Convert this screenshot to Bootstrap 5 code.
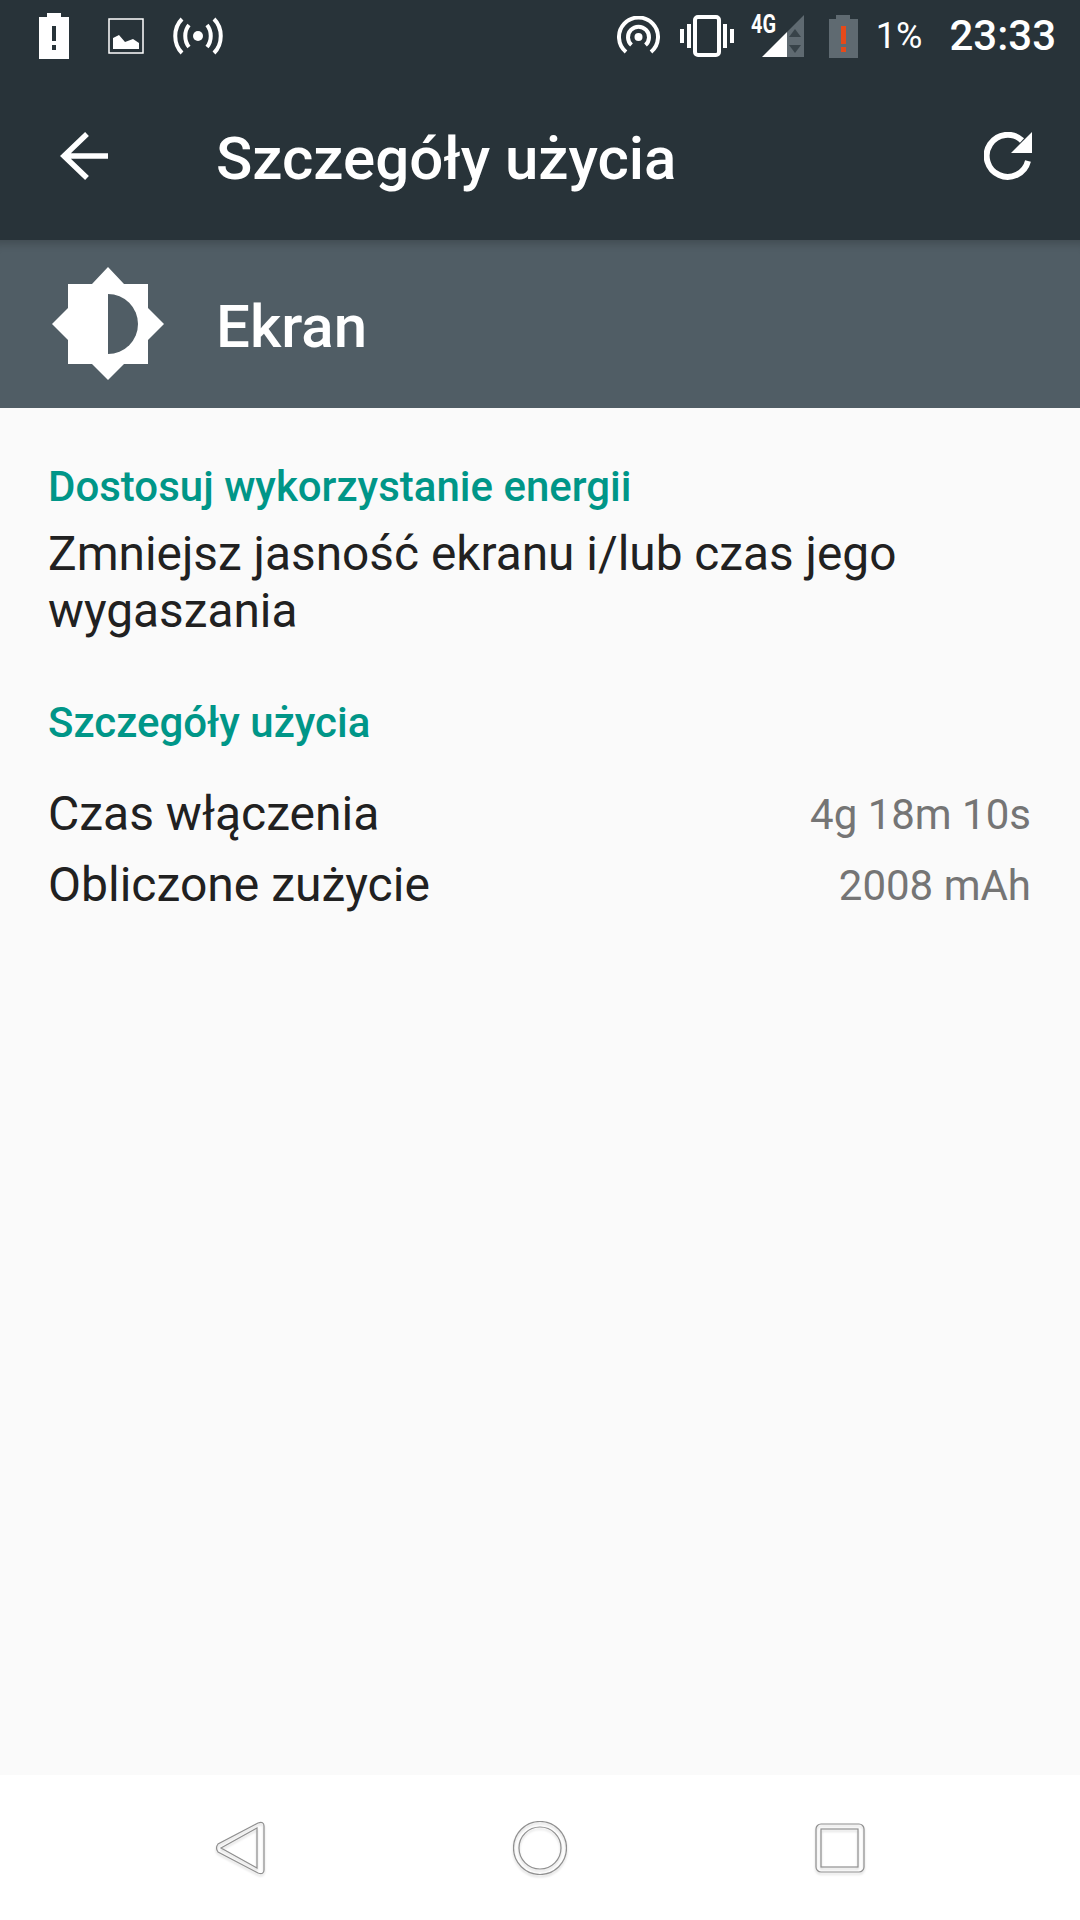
<!DOCTYPE html>
<html lang="pl">
<head>
    <meta charset="UTF-8" />
    <meta name="viewport" content="width=device-width, initial-scale=1" />
    <title>Szczegóły użycia</title>
    <link href="https://cdn.jsdelivr.net/npm/bootstrap@5.3.3/dist/css/bootstrap.min.css" rel="stylesheet" />
    <style>
      body {
        font-family: Roboto, "Liberation Sans", sans-serif;
        background-color: #fafafa;
      }
      .ekran { width: 1080px; height: 1920px; }
      .pasek-stanu { height: 72px; background-color: #283339; padding: 0 24px 0 39px; color: #fff; }
      .ikona-obraz { margin-left: 39px; }
      .ikona-radio { margin-left: 29px; }
      .ikona-wibracja { margin-left: 20px; }
      .ikona-sygnal { margin-left: 17px; }
      .ikona-bateria { margin-left: 25px; }
      .procent { font-size: 36px; line-height: 1; margin-left: 18px; }
      .zegar { font-size: 42px; line-height: 1; margin-left: 27px; font-weight: 500; }
      .pasek-tytulu { height: 168px; background-color: #283339; color: #fff; padding: 0 48px 0 60px; }
      .tytul { font-size: 60px; font-weight: 500; margin: 0 0 0 108px; padding-top: 5px; line-height: 1; }
      .pasek-ekran { height: 168px; background-color: #505d65; color: #fff; padding: 0 0 0 51px; box-shadow: inset 0 12px 8px -8px rgba(0,0,0,.18); }
      .pasek-ekran .tytul { margin-left: 51px; }
      .tresc { padding: 55px 49px 0 48px; }
      .naglowek { color: #009688; font-size: 42px; font-weight: 500; line-height: 48px; margin: 0; }
      .opis { color: #212121; font-size: 47.800px; line-height: 57px; margin: 15px 0 59px; }
      .wiersze { margin-top: 31px; }
      .wiersz { height: 71px; color: #212121; font-size: 48px; }
      .wartosc { color: #757575; font-size: 42px; padding-top: 2px; }
      .nawigacja { height: 145px; background-color: #fff; padding: 0 215px 0 215px; }
      .nawigacja svg { filter: drop-shadow(0 2px 1px rgba(0,0,0,.18)); }
    </style>
</head>
<body>
  <div class="ekran d-flex flex-column overflow-hidden">

    <div class="pasek-stanu d-flex align-items-center">
      <svg width="30" height="48" viewBox="0 0 30 48"><path fill="#fff" d="M8 1h14v4h8v42H0V5h8z"/><path fill="#283339" d="M13 14h4v15h-4zM13 33h4v5h-4z"/></svg>
      <svg class="ikona-obraz" width="36" height="36" viewBox="0 0 36 36"><rect x="1" y="1" width="34" height="34" fill="none" stroke="#fff" stroke-width="1.500"/><path fill="#fff" d="M5 20l6-3 6 7 8-3 6 4v6H5z"/></svg>
      <svg class="ikona-radio" width="50" height="38" viewBox="0 0 50 38" fill="none" stroke="#fff" stroke-width="4"><circle cx="25" cy="19" r="5" fill="#fff" stroke="none"/><path d="M16 8c-5 6-5 16 0 22M34 8c5 6 5 16 0 22M9 2C0 11 0 27 9 36M41 2c9 9 9 25 0 34"/></svg>
      <div class="flex-grow-1"></div>
      <svg width="43" height="40" viewBox="0 0 43 40" fill="none" stroke="#fff" stroke-width="4"><circle cx="21.500" cy="21" r="4" fill="#fff" stroke="none"/><path d="M14.500 29A10.500 10.500 0 1 1 28.500 29"/><path d="M9 36A19.500 19.500 0 1 1 34 36"/></svg>
      <svg class="ikona-wibracja" width="54" height="42" viewBox="0 0 54 42"><rect x="15" y="2" width="24" height="38" rx="3" fill="none" stroke="#fff" stroke-width="4"/><path fill="#fff" d="M0 14h4v14H0zM7 9h4v24H7zM43 9h4v24h-4zM50 14h4v14h-4z"/></svg>
      <svg class="ikona-sygnal" width="53" height="54" viewBox="0 -6 53 54"><path fill="#5f6a71" d="M53 0v42H36V17z"/><path fill="#fff" d="M11 42l25-25v25z"/><path fill="#283339" d="M44 14l6 8H38zM44 38l-6-8h12z" opacity=".7"/><text x="0" y="18" fill="#fff" font-family="Roboto, sans-serif" font-size="25" font-weight="700" textLength="25" lengthAdjust="spacingAndGlyphs">4G</text></svg>
      <svg class="ikona-bateria" width="29" height="43" viewBox="0 0 29 43"><path fill="#5f6a71" d="M7 0h14v4h8v39H0V4h7z"/><path fill="#e64a19" d="M12 11h5v18h-5zM12 32h5v5h-5z"/></svg>
      <span class="procent">1%</span>
      <span class="zegar">23:33</span>
    </div>

    <div class="pasek-tytulu d-flex align-items-center">
      <svg width="48" height="48" viewBox="0 0 48 48" fill="none" stroke="#fff" stroke-width="5.500"><path d="M48 24H4M27 2L4 24l23 22"/></svg>
      <h1 class="tytul flex-grow-1">Szczegóły użycia</h1>
      <svg width="48" height="48" viewBox="0 0 48 48"><path fill="none" stroke="#fff" stroke-width="6" d="M44 29A21 21 0 1 1 38 8.500"/><path fill="#fff" d="M48 0v21H27z"/></svg>
    </div>

    <div class="pasek-ekran d-flex align-items-center">
      <svg width="114" height="114" viewBox="0 0 114 114"><path fill="#fff" d="M57 0l16 17h24v24l16 16-16 16v24H73l-16 16-16-16H17V73L1 57l16-16V17h24z"/><path fill="#505d65" d="M57 27a30 30 0 0 1 0 60z"/></svg>
      <h2 class="tytul">Ekran</h2>
    </div>

    <div class="tresc flex-grow-1">
      <p class="naglowek">Dostosuj wykorzystanie energii</p>
      <p class="opis">Zmniejsz jasność ekranu i/lub czas jego wygaszania</p>
      <p class="naglowek">Szczegóły użycia</p>
      <div class="wiersze">
        <div class="wiersz d-flex justify-content-between align-items-center"><span>Czas włączenia</span><span class="wartosc">4g 18m 10s</span></div>
        <div class="wiersz d-flex justify-content-between align-items-center"><span>Obliczone zużycie</span><span class="wartosc">2008 mAh</span></div>
      </div>
    </div>

    <div class="nawigacja d-flex align-items-center justify-content-between">
      <svg width="50" height="54" viewBox="0 0 50 54" fill="none" stroke="#8f8f8f" stroke-width="1.200"><path d="M43 2L3 23q-3 4 0 8l40 21q6 2 6-3V5q0-5-6-3z"/><path d="M42 7v40L6 27z"/></svg>
      <svg width="54" height="54" viewBox="0 0 54 54" fill="none" stroke="#8f8f8f" stroke-width="1.200"><circle cx="27" cy="27" r="26.500"/><circle cx="27" cy="27" r="21"/></svg>
      <svg width="50" height="50" viewBox="0 0 50 50" fill="none" stroke="#8f8f8f" stroke-width="1.200"><rect x="1" y="1" width="48" height="48" rx="5"/><rect x="6" y="6" width="37" height="38"/></svg>
    </div>
  </div>
  <script src="https://cdn.jsdelivr.net/npm/bootstrap@5.3.3/dist/js/bootstrap.bundle.min.js"></script>
</body>
</html>
